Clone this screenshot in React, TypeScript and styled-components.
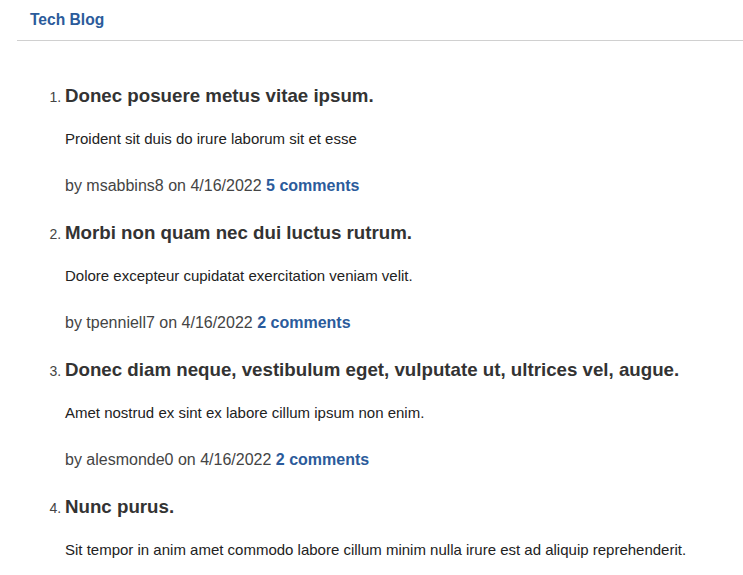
import React from "react";
import styled, { createGlobalStyle } from "styled-components";

const Global = createGlobalStyle`
  html, body { margin: 0; padding: 0; background: #fff; }
  body { font-family: "Liberation Sans", Arial, sans-serif; }
`;

const Header = styled.header`
  margin-left: 17px;
  height: 40px;
  border-bottom: 1px solid #d0d0d0;
  display: flex;
  align-items: center;
  padding-left: 13px;
`;

const Brand = styled.a`
  color: #2b5b9b;
  font-weight: bold;
  font-size: 15.6px;
  text-decoration: none;
`;

const List = styled.ol`
  margin: 44px 0 0 0;
  padding-left: 65px;
  list-style: decimal;
`;

const Item = styled.li`
  font-size: 14px;
  color: #333;
  &::marker { font-size: 14px; color: #444; }
`;

const Title = styled.h3`
  font-size: 18.72px;
  font-weight: bold;
  color: #333;
  margin: 0;
  line-height: 22px;
`;

const Body = styled.p`
  font-size: 15px;
  color: #222;
  margin: 23px 0 0 0;
  line-height: 17px;
`;

const Byline = styled.p`
  font-size: 16px;
  color: #444;
  margin: 30px 0 27px 0;
  line-height: 18px;
`;

const Comments = styled.a`
  color: #2b5b9b;
  font-weight: bold;
  text-decoration: none;
`;

const posts = [
  { title: "Donec posuere metus vitae ipsum.", body: "Proident sit duis do irure laborum sit et esse", author: "msabbins8", date: "4/16/2022", comments: 5 },
  { title: "Morbi non quam nec dui luctus rutrum.", body: "Dolore excepteur cupidatat exercitation veniam velit.", author: "tpenniell7", date: "4/16/2022", comments: 2 },
  { title: "Donec diam neque, vestibulum eget, vulputate ut, ultrices vel, augue.", body: "Amet nostrud ex sint ex labore cillum ipsum non enim.", author: "alesmonde0", date: "4/16/2022", comments: 2 },
  { title: "Nunc purus.", body: "Sit tempor in anim amet commodo labore cillum minim nulla irure est ad aliquip reprehenderit.", author: "jdoe3", date: "4/16/2022", comments: 1 },
];

export default function App() {
  return (
    <>
      <Global />
      <Header>
        <Brand href="#">Tech Blog</Brand>
      </Header>
      <List>
        {posts.map((p, i) => (
          <Item key={i}>
            <Title>{p.title}</Title>
            <Body>{p.body}</Body>
            <Byline>
              by {p.author} on {p.date} <Comments href="#">{p.comments} comments</Comments>
            </Byline>
          </Item>
        ))}
      </List>
    </>
  );
}
